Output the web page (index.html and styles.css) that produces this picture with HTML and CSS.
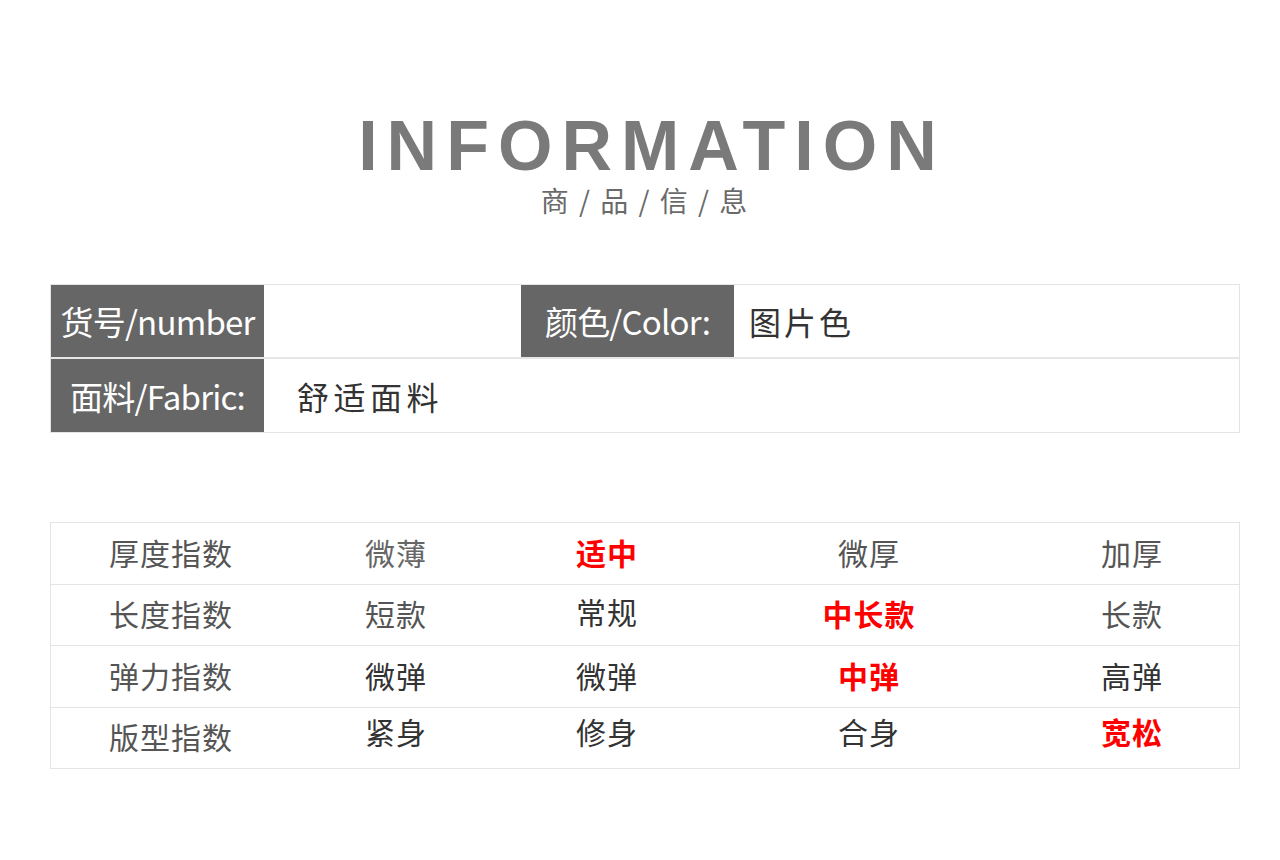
FILE: index.html
```html
<!DOCTYPE html>
<html lang="zh-CN">
<head>
<meta charset="utf-8">
<title>INFORMATION 商品信息</title>
<link rel="stylesheet" href="styles.css">
</head>
<body>
<div class="page">
  <header class="head">
    <h1 class="en">INFORMATION</h1>
    <p class="cn">商 / 品 / 信 / 息</p>
  </header>

  <section class="info">
    <div class="info-row">
      <div class="label">货号/number</div>
      <div class="value blank"></div>
      <div class="label">颜色/Color:</div>
      <div class="value value-color">图片色</div>
    </div>
    <div class="info-row">
      <div class="label">面料/Fabric:</div>
      <div class="value value-fabric">舒适面料</div>
    </div>
  </section>

  <section class="index">
    <div class="idx-row">
      <div class="cell name">厚度指数</div>
      <div class="cell light">微薄</div>
      <div class="cell on">适中</div>
      <div class="cell mid">微厚</div>
      <div class="cell mid">加厚</div>
    </div>
    <div class="idx-row">
      <div class="cell name">长度指数</div>
      <div class="cell mid">短款</div>
      <div class="cell dark up-s">常规</div>
      <div class="cell on">中长款</div>
      <div class="cell mid">长款</div>
    </div>
    <div class="idx-row">
      <div class="cell name">弹力指数</div>
      <div class="cell dark">微弹</div>
      <div class="cell dark">微弹</div>
      <div class="cell on">中弹</div>
      <div class="cell dark">高弹</div>
    </div>
    <div class="idx-row">
      <div class="cell name">版型指数</div>
      <div class="cell dark up">紧身</div>
      <div class="cell dark up">修身</div>
      <div class="cell dark up">合身</div>
      <div class="cell on up">宽松</div>
    </div>
  </section>
</div>
</body>
</html>
```

FILE: styles.css
```css
* { box-sizing: border-box; }
html, body { margin: 0; padding: 0; background: #fff; }
body {
  font-family: "Noto Sans CJK SC", "Noto Sans", sans-serif;
  color: #444;
}
.page {
  width: 1280px;
  padding: 111px 40px 0 50px;
}
.head {
  text-align: center;
  width: 1190px;
}
.en {
  margin: 0 0 0 14px;
  font-family: "Liberation Sans", Arial, sans-serif;
  font-weight: 700;
  font-size: 70px;
  line-height: 70px;
  letter-spacing: 9px;
  color: #7a7a7a;
}
.cn {
  margin: 4px 0 0 0;
  font-size: 28px;
  line-height: 30px;
  color: #6a6a6a;
  letter-spacing: 2px;
}

/* info table */
.info {
  margin-top: 69px;
  width: 1190px;
  border: 1px solid #e4e4e4;
}
.info-row {
  display: flex;
  height: 72px;
}
.info-row + .info-row {
  border-top: 2px solid #e6e6e6;
  height: 75px;
}
.label {
  flex: 0 0 213px;
  background: #666666;
  color: #fff;
  font-size: 33px;
  letter-spacing: -0.8px;
  display: flex;
  align-items: center;
  justify-content: center;
}
.value {
  display: flex;
  align-items: center;
  font-size: 32px;
  letter-spacing: 3px;
  color: #333;
}
.blank { flex: 0 0 257px; }
.value-color { flex: 1; padding-left: 15px; }
.value-fabric { flex: 1; padding-left: 33px; letter-spacing: 4.5px; }

/* index table */
.index {
  margin-top: 89px;
  width: 1190px;
  border: 1px solid #e4e4e4;
  border-bottom: 0;
}
.idx-row {
  display: grid;
  grid-template-columns: 240px 210px 212px 312px 1fr;
  height: 62px;
  border-bottom: 1px solid #e4e4e4;
}
.idx-row:nth-child(even) { height: 61px; }
.cell {
  display: flex;
  align-items: center;
  justify-content: center;
  font-size: 30px;
  letter-spacing: 1px;
  padding-bottom: 4px;
}
.name { color: #555; }
.light { color: #666; }
.mid { color: #555; }
.dark { color: #333; }
.on { color: #ff0000; font-weight: 700; }
.up { padding-bottom: 15px; }
.up-s { padding-bottom: 9px; }
```
